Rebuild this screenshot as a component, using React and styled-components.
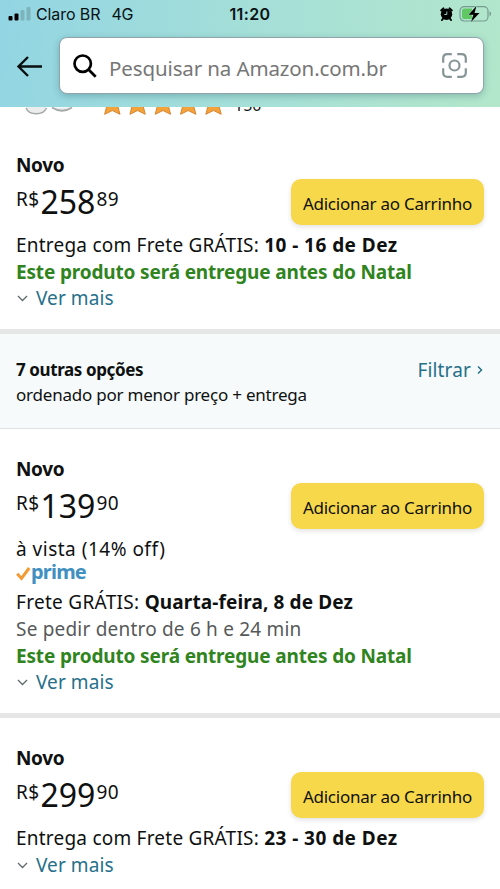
import React from 'react'
import styled, { createGlobalStyle } from "styled-components"


const GlobalStyle=createGlobalStyle`
    *{
        box-sizing:border-box;
    }
    body{
        margin:0;
        background:#fff;
        overflow:hidden;
    }
`

const Page=styled.div`
    width:500px;
    height:889px;
    overflow:hidden;
    display:flex;
    flex-direction:column;
    background:#fff;
    color:#0f1111;
    font-family:"Noto Sans", "Liberation Sans", sans-serif;
    font-size:19px;
    & > *{
        flex-shrink:0;
    }
`

const Header=styled.header`
    height:106.5px;
    background:linear-gradient(100deg, #92d5e3 0%, #a5dfd8 50%, #b3e7cb 100%);
`

const StatusBar=styled.div`
    height:37px;
    padding:0 8px 10px;
    display:grid;
    grid-template-columns:1fr auto 1fr;
    align-items:center;
    font-family:Inter, "Liberation Sans", sans-serif;
    font-size:16px;
    color:#0a1214;
`

const Carrier=styled.div`
    display:flex;
    align-items:center;
    gap:5px;
    letter-spacing:-0.1px;
`

const Network=styled.span`
    margin-left:6px;
`

const Clock=styled.span`
    font-weight:600;
    letter-spacing:0.4px;
`

const StatusIcons=styled.div`
    display:flex;
    justify-content:flex-end;
    align-items:center;
    gap:6px;
`

const SearchRow=styled.div`
    display:flex;
    align-items:center;
    padding:0 16px;
    gap:15px;
`

const SearchBox=styled.div`
    flex:1;
    height:57px;
    display:flex;
    align-items:center;
    padding:0 16px 0 13px;
    background:#fff;
    border:1px solid #8fa5ab;
    border-radius:8px;
    box-shadow:0 2px 7px rgba(30,80,90,0.3);
`

const Placeholder=styled.span`
    flex:1;
    margin-left:12px;
    padding-top:4px;
    font-size:20.5px;
    letter-spacing:-0.12px;
    color:#767676;
    white-space:nowrap;
`

const Review=styled.div`
    height:18.5px;
    padding-left:24px;
    display:flex;
    align-items:flex-start;
    overflow:hidden;
`

const ReviewCount=styled.span`
    margin:-13px 0 0 11px;
    font-size:16px;
    line-height:22px;
`

const Offer=styled.section`
    padding:27px 16px 17px;
`

const Line=styled.div`
    height:26.6px;
    line-height:26.6px;
    white-space:nowrap;
    letter-spacing:${({spacing})=>spacing || 0}px;
    color:${({color})=>color || "inherit"};
    font-weight:${({bold})=>bold ? 700 : 400};
`

const Condition=styled.div`
    height:27px;
    line-height:27px;
    font-weight:700;
    letter-spacing:-0.35px;
`

const Strong=styled.b`
    font-weight:700;
    letter-spacing:${({spacing})=>spacing || 0}px;
`

const PriceRow=styled.div`
    height:46px;
    margin-bottom:7px;
    display:flex;
    align-items:center;
    justify-content:space-between;
`

const Price=styled.div`
    display:flex;
    align-items:flex-start;
    line-height:50px;
`

const Small=styled.span`
    font-size:19px;
    line-height:44px;
    letter-spacing:0.4px;
`

const Whole=styled.span`
    font-size:32px;
    padding:0 1px;
`

const CartButton=styled.button`
    width:193px;
    height:46px;
    padding:3px 0 0;
    border:none;
    border-radius:10px;
    background:#f7d84b;
    box-shadow:0 2px 5px rgba(15,17,17,0.12);
    font-family:inherit;
    font-size:17px;
    letter-spacing:-0.24px;
    color:#0f1111;
    white-space:nowrap;
`

const More=styled(Line)`
    display:flex;
    align-items:center;
    gap:8px;
    padding-left:1px;
    color:#26708a;
`

const Prime=styled(Line)`
    display:flex;
    align-items:flex-start;
    line-height:18px;
    font-weight:700;
    font-size:20px;
    color:#4190c1;
`

const Divider=styled.div`
    height:5.5px;
    background:#e6e6e6;
`

const Options=styled.section`
    height:95px;
    padding:22.5px 16px 0;
    display:flex;
    justify-content:space-between;
    background:#f6fafb;
    border-bottom:1px solid #dfe3e4;
    font-size:17px;
`

const Summary=styled.div`
    display:flex;
    flex-direction:column;
    & > div + div{
        margin-top:-1.2px;
    }
`

const Filter=styled.div`
    display:flex;
    align-items:center;
    height:26px;
    gap:6px;
    padding-right:1px;
    font-size:19px;
    letter-spacing:0.15px;
    color:#26708a;
`

const SignalIcon=()=>(
  <svg width="23" height="14" viewBox="0 0 23 14">
    <rect x="0.5" y="9" width="4" height="4.5" rx="1" fill="#000"/>
    <rect x="6.5" y="6.5" width="4" height="7" rx="1" fill="#000"/>
    <rect x="12.5" y="3" width="4" height="10.5" rx="1" fill="#7db3bb"/>
    <rect x="18.5" y="0" width="4" height="13.5" rx="1" fill="#7db3bb"/>
  </svg>
)

const AlarmIcon=()=>(
  <svg width="13" height="14" viewBox="0 0 13 14">
    <circle cx="6.5" cy="7.3" r="5.7" fill="#000"/>
    <path d="M1.2 3.4 3.4 1.4M11.8 3.4 9.6 1.4M2 13l1.6-2M11 13l-1.6-2" stroke="#000" strokeWidth="2" strokeLinecap="round"/>
    <path d="M6.8 4.5v3H4.3" stroke="#a9e0d0" strokeWidth="0.9" fill="none"/>
  </svg>
)

const BatteryIcon=()=>(
  <svg width="33" height="18" viewBox="0 0 33 18">
    <rect x="1" y="1.6" width="28" height="14.4" rx="4.2" fill="none" stroke="#769b90" strokeWidth="1.2"/>
    <path d="M5.5 3.6H13v10.4H5.5Q3 14 3 11.5V6.1Q3 3.6 5.5 3.6z" fill="#5fc763"/>
    <path d="M30.5 6.3q1.7.6 1.7 2.5t-1.7 2.5z" fill="#769b90"/>
    <path d="M17.5 1 9.5 9.7h4.9l-2.4 7.2 8.500-9h-5z" fill="#000" stroke="#aee4cd" strokeWidth="1" paintOrder="stroke"/>
  </svg>
)

const BackIcon=()=>(
  <svg width="28" height="22" viewBox="0 0 28 22" fill="none" stroke="#0a0f10" strokeWidth="2.4">
    <path d="M26 11.5H2.5M12 2 2.5 11.5 12 21"/>
  </svg>
)

const SearchIcon=()=>(
  <svg width="24" height="24" viewBox="0 0 24 24" fill="none" stroke="#000" strokeWidth="2.7">
    <circle cx="9.7" cy="9.7" r="8.2"/>
    <path d="M15.5 15.5l7.2 7.2"/>
  </svg>
)

const CameraIcon=()=>(
  <svg width="25" height="25" viewBox="0 0 25 25" fill="none" stroke="#879596" strokeWidth="2.2">
    <path d="M1.2 9.8V5.5q0-4.3 4.3-4.3h4.3M15.2 1.2h4.3q4.3 0 4.3 4.3v4.3M23.8 15.2v4.3q0 4.3-4.3 4.3h-4.3M9.8 23.8H5.5q-4.3 0-4.3-4.3v-4.3"/>
    <circle cx="12.500" cy="12.500" r="5"/>
  </svg>
)

const ProductPeek=()=>(
  <svg width="80" height="9" viewBox="0 0 80 9">
    <path d="M2 0C4 9 20 10 22.5 0z" fill="#eceded"/>
    <path d="M2 1C5 8.5 19 9 22.5 1" fill="none" stroke="#a6a9aa" strokeWidth="1.5"/>
    <path d="M28 0.5Q38 7 48 0.5" fill="#eceded" stroke="#a6a9aa" strokeWidth="1.8"/>
  </svg>
)

const Stars=()=>(
  <svg width="119" height="9" viewBox="0 0 119 9">
    {[0,1,2,3,4].map((n)=>(
      <path key={n} d="M3-1 0.8 7.3 8.5 3.5l7.7 3.8L14-1z" transform={`translate(${n*25.3-0.2} 0)`} fill="#f3a33a" stroke="#d98432" strokeWidth="1"/>
    ))}
  </svg>
)

const ChevronDown=()=>(
  <svg width="11" height="7" viewBox="0 0 11 7" fill="none" stroke="#60696b" strokeWidth="1.3">
    <path d="M1 1l4.5 4.5L10 1"/>
  </svg>
)

const ChevronRight=()=>(
  <svg width="6" height="10" viewBox="0 0 6 10" fill="none" stroke="#26708a" strokeWidth="1.5">
    <path d="M1 1.5l3.5 3.5L1 8.5"/>
  </svg>
)

const PrimeCheck=()=>(
  <svg width="15" height="18" viewBox="0 0 15 18" fill="none" stroke="#f29b35" strokeWidth="3">
    <path d="M1.2 10.8 5.5 15.5 13.2 5"/>
  </svg>
)

const PriceLine=({whole, cents})=>(
  <PriceRow>
    <Price>
      <Small>R$</Small>
      <Whole>{whole}</Whole>
      <Small>{cents}</Small>
    </Price>
    <CartButton>Adicionar ao Carrinho</CartButton>
  </PriceRow>
)

const SeeMore=()=>(
  <More spacing={0.08}>
    <ChevronDown/>
    <span>Ver mais</span>
  </More>
)

const Christmas=()=>(
  <Line bold spacing={-0.155} color="#2f841e">Este produto será entregue antes do Natal</Line>
)

const App = () => {
  return (
   <>
    <GlobalStyle/>
    <Page>
        <Header>
            <StatusBar>
                <Carrier><SignalIcon/>Claro BR <Network>4G</Network></Carrier>
                <Clock>11:20</Clock>
                <StatusIcons><AlarmIcon/><BatteryIcon/></StatusIcons>
            </StatusBar>
            <SearchRow>
                <BackIcon/>
                <SearchBox>
                    <SearchIcon/>
                    <Placeholder>Pesquisar na Amazon.com.br</Placeholder>
                    <CameraIcon/>
                </SearchBox>
            </SearchRow>
        </Header>
        <Review>
            <ProductPeek/>
            <Stars/>
            <ReviewCount>150</ReviewCount>
        </Review>
        <Offer>
            <Condition>Novo</Condition>
            <PriceLine whole="258" cents="89"/>
            <Line spacing={0.22}>Entrega com Frete GRÁTIS: <Strong spacing={0.45}>10 - 16 de Dez</Strong></Line>
            <Christmas/>
            <SeeMore/>
        </Offer>
        <Divider/>
        <Options>
            <Summary>
                <Line bold spacing={-0.4}>7 outras opções</Line>
                <Line spacing={-0.22}>ordenado por menor preço + entrega</Line>
            </Summary>
            <Filter>Filtrar<ChevronRight/></Filter>
        </Options>
        <Offer>
            <Condition>Novo</Condition>
            <PriceLine whole="139" cents="90"/>
            <Line spacing={0.5}>à vista (14% off)</Line>
            <Prime spacing={-0.8}><PrimeCheck/>prime</Prime>
            <Line spacing={0.3}>Frete GRÁTIS: <Strong spacing={0.12}>Quarta-feira, 8 de Dez</Strong></Line>
            <Line spacing={0.2} color="#565959">Se pedir dentro de 6 h e 24 min</Line>
            <Christmas/>
            <SeeMore/>
        </Offer>
        <Divider/>
        <Offer>
            <Condition>Novo</Condition>
            <PriceLine whole="299" cents="90"/>
            <Line spacing={0.22}>Entrega com Frete GRÁTIS: <Strong spacing={0.45}>23 - 30 de Dez</Strong></Line>
            <SeeMore/>
        </Offer>
    </Page>
   </>
  )
}

export default App;
